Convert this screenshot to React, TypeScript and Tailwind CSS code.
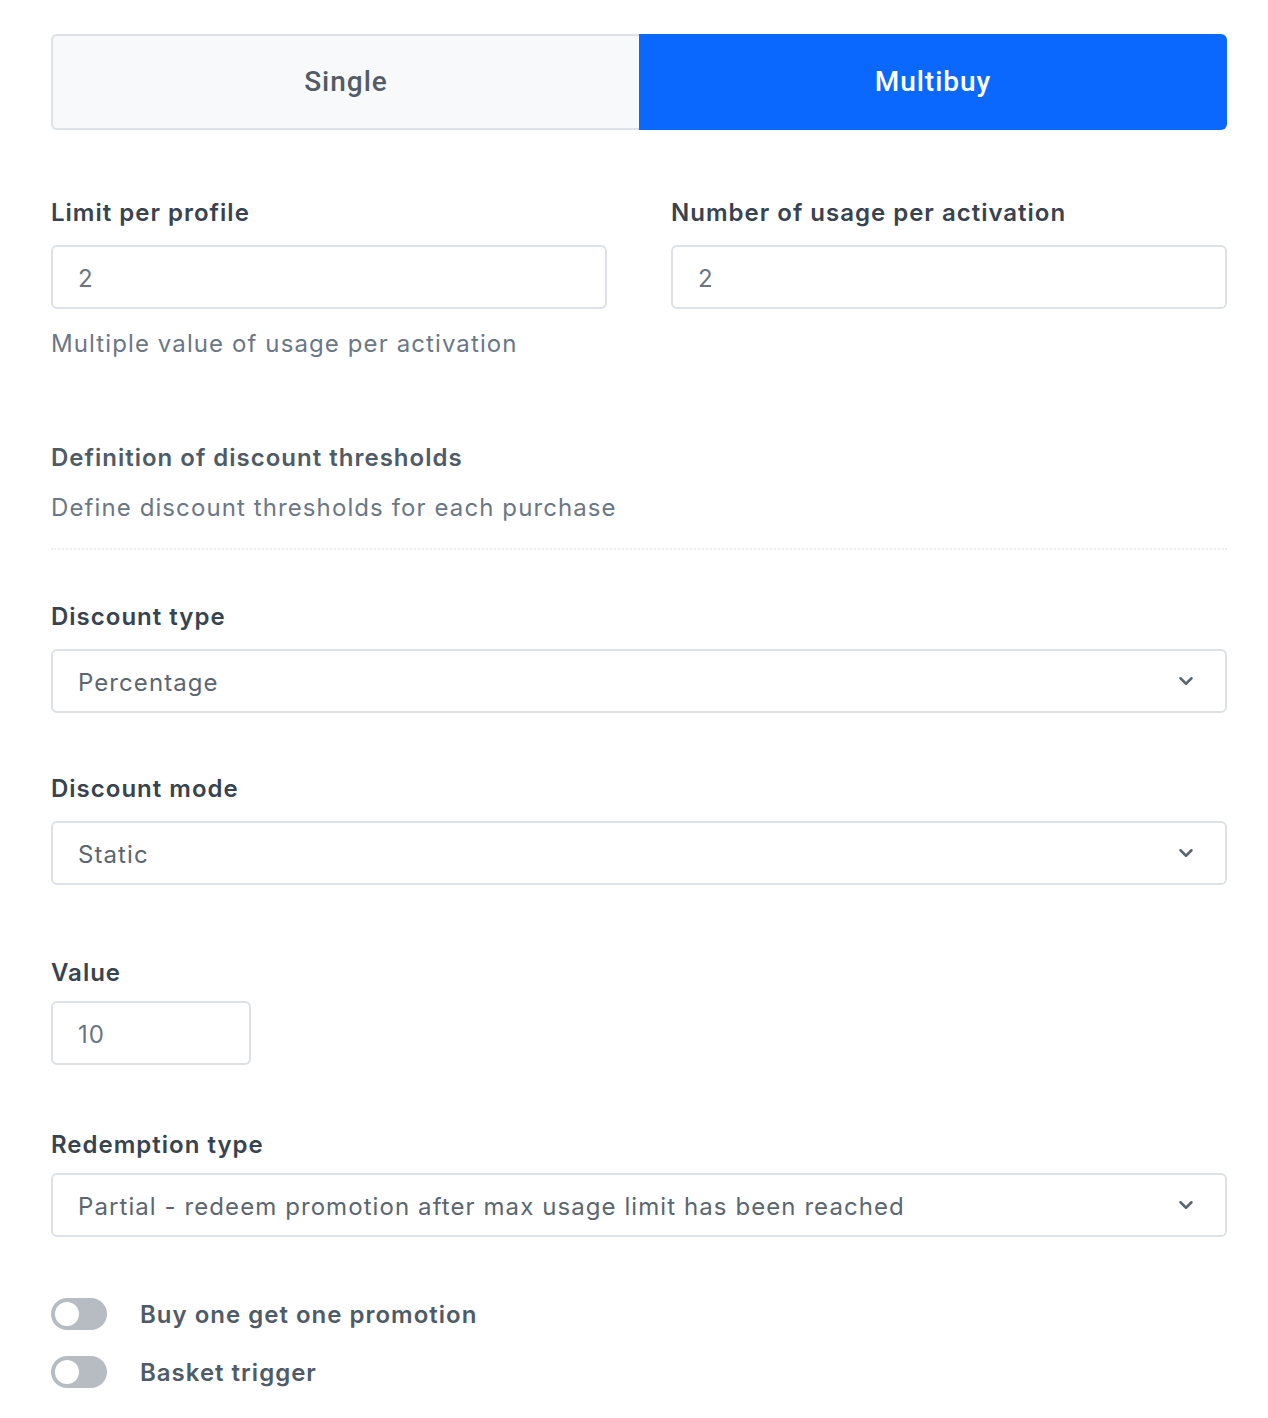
import { ChevronDown } from "lucide-react";

const font = { fontFamily: "Inter, 'Noto Sans', sans-serif" };

const Label = ({ children }: { children: React.ReactNode }) => (
  <div className="text-[24px] leading-[32px] font-semibold tracking-[1px] text-[#384350]">{children}</div>
);

const Input = ({ value, className = "" }: { value: string; className?: string }) => (
  <div
    className={`h-[64px] border-2 border-[#dde1e5] rounded-[6px] bg-white flex items-center px-[25px] pt-[4px] text-[24px] tracking-[1.1px] text-[#6b7580] ${className}`}
  >
    {value}
  </div>
);

const Select = ({ value }: { value: string }) => (
  <div className="h-[64px] border-2 border-[#dde1e5] rounded-[6px] bg-white flex items-center justify-between pl-[25px] pr-[28px] text-[24px] tracking-[1.08px] text-[#5b6670]">
    <span className="pt-[3px]">{value}</span>
    <ChevronDown className="w-[22px] h-[22px] text-[#5b6670]" strokeWidth={2.75} />
  </div>
);

const Toggle = ({ label }: { label: string }) => (
  <div className="flex items-center gap-[33px]">
    <div className="w-[56px] h-[32px] rounded-full bg-[#b6bcc2] p-[4px] flex items-center">
      <div className="w-[24px] h-[24px] rounded-full bg-white" />
    </div>
    <span className="text-[24px] leading-[32px] font-semibold tracking-[1px] text-[#4f5b66] pt-[2px]">{label}</span>
  </div>
);

export default function App() {
  return (
    <div className="w-[1268px] min-h-[1418px] bg-white pl-[51px] pr-[41px] pt-[34px] pb-[30px]" style={font}>
      <div className="grid grid-cols-2 h-[96px]" style={{ fontFamily: "Roboto, sans-serif" }}>
        <button className="bg-[#f8f9fa] border-2 border-r-0 border-[#dde1e5] rounded-l-[6px] text-[28px] tracking-[1px] font-medium text-[#525c67]">
          Single
        </button>
        <button className="bg-[#0b68ff] rounded-r-[6px] text-[28px] tracking-[1px] font-medium text-white">
          Multibuy
        </button>
      </div>

      <div className="grid grid-cols-2 gap-x-[64px] mt-[67px]">
        <div>
          <Label>Limit per profile</Label>
          <Input value="2" className="mt-[16px]" />
          <div className="mt-[19px] text-[24px] leading-[32px] tracking-[1.1px] text-[#6b7785]">
            Multiple value of usage per activation
          </div>
        </div>
        <div>
          <Label>Number of usage per activation</Label>
          <Input value="2" className="mt-[16px]" />
        </div>
      </div>

      <div className="mt-[82px]">
        <div className="text-[24px] leading-[32px] font-semibold tracking-[1px] text-[#4f5b66]">
          Definition of discount thresholds
        </div>
        <div className="mt-[18px] text-[24px] leading-[32px] tracking-[1.1px] text-[#6b7785]">
          Define discount thresholds for each purchase
        </div>
        <div className="mt-[24px] border-t-2 border-dotted border-[#eceef0]" />
      </div>

      <div className="mt-[51px]">
        <Label>Discount type</Label>
        <div className="mt-[16px]">
          <Select value="Percentage" />
        </div>
      </div>

      <div className="mt-[60px]">
        <Label>Discount mode</Label>
        <div className="mt-[16px]">
          <Select value="Static" />
        </div>
      </div>

      <div className="mt-[72px]">
        <Label>Value</Label>
        <Input value="10" className="mt-[12px] w-[200px]" />
      </div>

      <div className="mt-[64px]">
        <Label>Redemption type</Label>
        <div className="mt-[12px]">
          <Select value="Partial - redeem promotion after max usage limit has been reached" />
        </div>
      </div>

      <div className="mt-[60px] flex flex-col gap-[24px]">
        <Toggle label="Buy one get one promotion" />
        <Toggle label="Basket trigger" />
      </div>
    </div>
  );
}
